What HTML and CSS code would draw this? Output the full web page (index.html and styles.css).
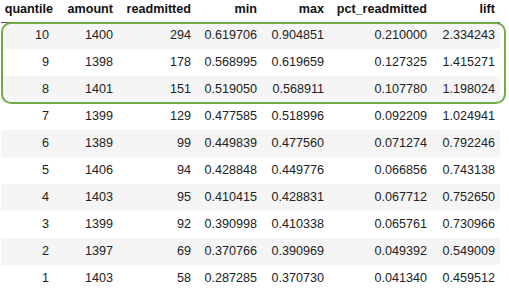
FILE: index.html
```html
<!DOCTYPE html>
<html lang="en">
<head>
  <meta charset="UTF-8" />
  <title>Lift by quantile</title>
  <link rel="stylesheet" href="styles.css">
</head>
<body>
  <div class="frame">
    <table class="lift-table">
      <colgroup>
        <col class="c-quantile">
        <col class="c-amount">
        <col class="c-readmitted">
        <col class="c-min">
        <col class="c-max">
        <col class="c-pct">
        <col class="c-lift">
      </colgroup>
      <thead>
        <tr>
          <th>quantile</th>
          <th>amount</th>
          <th>readmitted</th>
          <th>min</th>
          <th>max</th>
          <th>pct_readmitted</th>
          <th>lift</th>
        </tr>
      </thead>
      <tbody>
        <tr><td>10</td><td>1400</td><td>294</td><td>0.619706</td><td>0.904851</td><td>0.210000</td><td>2.334243</td></tr>
        <tr><td>9</td><td>1398</td><td>178</td><td>0.568995</td><td>0.619659</td><td>0.127325</td><td>1.415271</td></tr>
        <tr><td>8</td><td>1401</td><td>151</td><td>0.519050</td><td>0.568911</td><td>0.107780</td><td>1.198024</td></tr>
        <tr><td>7</td><td>1399</td><td>129</td><td>0.477585</td><td>0.518996</td><td>0.092209</td><td>1.024941</td></tr>
        <tr><td>6</td><td>1389</td><td>99</td><td>0.449839</td><td>0.477560</td><td>0.071274</td><td>0.792246</td></tr>
        <tr><td>5</td><td>1406</td><td>94</td><td>0.428848</td><td>0.449776</td><td>0.066856</td><td>0.743138</td></tr>
        <tr><td>4</td><td>1403</td><td>95</td><td>0.410415</td><td>0.428831</td><td>0.067712</td><td>0.752650</td></tr>
        <tr><td>3</td><td>1399</td><td>92</td><td>0.390998</td><td>0.410338</td><td>0.065761</td><td>0.730966</td></tr>
        <tr><td>2</td><td>1397</td><td>69</td><td>0.370766</td><td>0.390969</td><td>0.049392</td><td>0.549009</td></tr>
        <tr><td>1</td><td>1403</td><td>58</td><td>0.287285</td><td>0.370730</td><td>0.041340</td><td>0.459512</td></tr>
      </tbody>
    </table>
    <div class="highlight"></div>
  </div>
</body>
</html>
```

FILE: styles.css
```css
* {
  margin: 0;
  padding: 0;
  box-sizing: border-box;
}

body {
  background: #fff;
  color: #222;
  font-family: 'Liberation Sans', Arial, sans-serif;
  font-size: 12.6px;
}

.frame {
  position: relative;
  width: 509px;
  height: 294px;
  padding-left: 1px;
}

.lift-table {
  border-collapse: collapse;
  table-layout: fixed;
  width: 499px;
}

.c-quantile { width: 57px; }
.c-amount { width: 60px; }
.c-readmitted { width: 78px; }
.c-min { width: 66px; }
.c-max { width: 67px; }
.c-pct { width: 103px; }
.c-lift { width: 68px; }

.lift-table th,
.lift-table td {
  text-align: right;
  padding: 0 5px 0 0;
  white-space: nowrap;
}

.lift-table thead tr {
  height: 22px;
  border-bottom: 1px solid #555;
}

.lift-table th {
  font-weight: bold;
  color: #111;
  vertical-align: top;
  padding-top: 2px;
}

.lift-table tbody tr {
  height: 27px;
}

.lift-table td {
  vertical-align: middle;
  padding-bottom: 1px;
}

.lift-table td:first-child {
  padding-right: 9px;
}

.lift-table tbody tr:nth-child(odd) {
  background: #f5f5f5;
}

/* green box around the top three quantiles */
.highlight {
  position: absolute;
  left: 1px;
  top: 22px;
  width: 505px;
  height: 82px;
  border: 2px solid #70ad47;
  border-radius: 10px;
  pointer-events: none;
}
```
